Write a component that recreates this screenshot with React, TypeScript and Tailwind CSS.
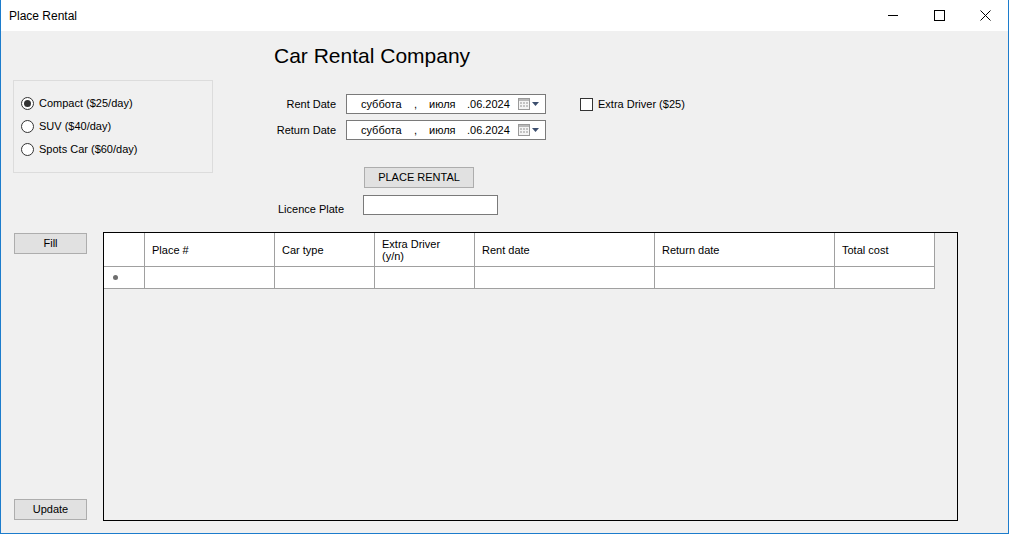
import React from 'react';

const font = { fontFamily: '"Liberation Sans", Arial, sans-serif' };

/* small calendar glyph + dropdown arrow used in the date pickers */
const CalendarDrop: React.FC = () => (
  <svg width="22" height="13" viewBox="0 0 22 13" className="shrink-0">
    <rect x="0.5" y="0.5" width="11" height="11" fill="#f4f4f4" stroke="#9a9a9a" />
    <rect x="1" y="1" width="10" height="2" fill="#b8b8b8" />
    <g fill="#c4c4c4">
      <rect x="2" y="4" width="2" height="2" />
      <rect x="5" y="4" width="2" height="2" />
      <rect x="8" y="4" width="2" height="2" />
      <rect x="2" y="7" width="2" height="2" />
      <rect x="5" y="7" width="2" height="2" />
      <rect x="8" y="7" width="2" height="2" />
    </g>
    <path d="M14 4 L21 4 L17.5 8 Z" fill="#3c4e6e" />
  </svg>
);

const DatePicker: React.FC = () => (
  <div className="w-[200px] h-[20px] bg-white border border-[#7a7a7a] flex items-center pl-[14px] pr-[5px] text-[11px] text-black">
    <span className="w-[53px]">суббота</span>
    <span className="w-[15px]">,</span>
    <span className="w-[38px]">июля</span>
    <span>.06.2024</span>
    <span className="ml-auto">
      <CalendarDrop />
    </span>
  </div>
);

const Radio: React.FC<{ checked?: boolean; label: string }> = ({ checked, label }) => (
  <div className="flex items-center h-[23px]">
    <span className="w-[13px] h-[13px] rounded-full border border-[#333] bg-white flex items-center justify-center">
      {checked && <span className="w-[7px] h-[7px] rounded-full bg-[#333]" />}
    </span>
    <span className="ml-[5px] text-[11px] text-black">{label}</span>
  </div>
);

const Button: React.FC<{ label: string; className?: string }> = ({ label, className = '' }) => (
  <div
    className={`h-[21px] bg-[#e1e1e1] border border-[#adadad] flex items-center justify-center text-[11px] text-black ${className}`}
  >
    {label}
  </div>
);

const columns = [
  { w: 'w-[130px]', label: 'Place #' },
  { w: 'w-[100px]', label: 'Car type' },
  { w: 'w-[100px]', label: 'Extra Driver\n(y/n)' },
  { w: 'w-[180px]', label: 'Rent date' },
  { w: 'w-[180px]', label: 'Return date' },
  { w: 'w-[100px]', label: 'Total cost' },
];

export default function App() {
  return (
    <div className="w-[1009px] h-[534px] flex flex-col border-x border-b border-[#1c7ccc] bg-[#f0f0f0]" style={font}>
      {/* Title bar */}
      <div className="h-[31px] bg-white flex items-center shrink-0">
        <span className="ml-[8px] text-[12px] text-black">Place Rental</span>
        <div className="ml-auto flex h-full">
          <div className="w-[46px] h-full flex items-center justify-center">
            <span className="w-[10px] h-px bg-black" />
          </div>
          <div className="w-[46px] h-full flex items-center justify-center">
            <span className="w-[11px] h-[11px] border border-black" />
          </div>
          <div className="w-[46px] h-full flex items-center justify-center">
            <svg width="11" height="11" viewBox="0 0 11 11">
              <path d="M0.5 0.5 L10.5 10.5 M10.5 0.5 L0.5 10.5" stroke="#000" strokeWidth="1" />
            </svg>
          </div>
        </div>
      </div>

      {/* Top form area */}
      <div className="h-[201px] flex shrink-0">
        <div className="pl-[12px] pt-[49px]">
          <div className="w-[200px] h-[93px] border border-[#dcdcdc] pl-[7px] pt-[11px]">
            <Radio checked label="Compact ($25/day)" />
            <Radio label="SUV ($40/day)" />
            <Radio label="Spots Car ($60/day)" />
          </div>
        </div>

        <div className="ml-[61px] flex flex-col">
          <div className="mt-[13px] h-[24px] text-[21px] leading-[24px] text-black">Car Rental Company</div>

          <div className="mt-[26px] flex items-center h-[20px]">
            <span className="w-[62px] text-right text-[11px] text-black">Rent Date</span>
            <div className="ml-[10px]">
              <DatePicker />
            </div>
            <div className="ml-[34px] flex items-center">
              <span className="w-[13px] h-[13px] border border-[#333] bg-white" />
              <span className="ml-[5px] text-[11px] text-black">Extra Driver ($25)</span>
            </div>
          </div>

          <div className="mt-[6px] flex items-center h-[20px]">
            <span className="w-[62px] text-right text-[11px] text-black">Return Date</span>
            <div className="ml-[10px]">
              <DatePicker />
            </div>
          </div>

          <Button label="PLACE RENTAL" className="mt-[27px] ml-[90px] w-[110px]" />

          <div className="mt-[7px] flex items-center h-[20px]">
            <span className="ml-[4px] w-[85px] text-[11px] text-black pt-[8px]">Licence Plate</span>
            <div className="w-[135px] h-[20px] bg-white border border-[#7a7a7a]" />
          </div>
        </div>
      </div>

      {/* Bottom area */}
      <div className="flex-1 flex">
        <div className="pl-[13px] w-[86px] flex flex-col pt-[1px] pb-[13px]">
          <Button label="Fill" className="w-[73px]" />
          <Button label="Update" className="w-[73px] mt-auto" />
        </div>

        <div className="ml-[16px] w-[855px] h-[289px] border border-black bg-[#f0f0f0]">
          {/* header row */}
          <div className="flex h-[34px]">
            <div className="w-[41px] bg-white border-r border-b border-[#a0a0a0]" />
            {columns.map((c) => (
              <div
                key={c.label}
                className={`${c.w} bg-white border-r border-b border-[#a0a0a0] flex items-center pl-[7px] text-[11px] leading-[12px] text-black whitespace-pre`}
              >
                {c.label}
              </div>
            ))}
          </div>
          {/* new row */}
          <div className="flex h-[22px]">
            <div className="w-[41px] bg-white border-r border-b border-[#a0a0a0] flex items-center pl-[9px]">
              <span className="w-[5px] h-[5px] rounded-full bg-[#6e6e6e]" />
            </div>
            {columns.map((c) => (
              <div key={c.label} className={`${c.w} bg-white border-r border-b border-[#a0a0a0]`} />
            ))}
          </div>
        </div>
      </div>
    </div>
  );
}
